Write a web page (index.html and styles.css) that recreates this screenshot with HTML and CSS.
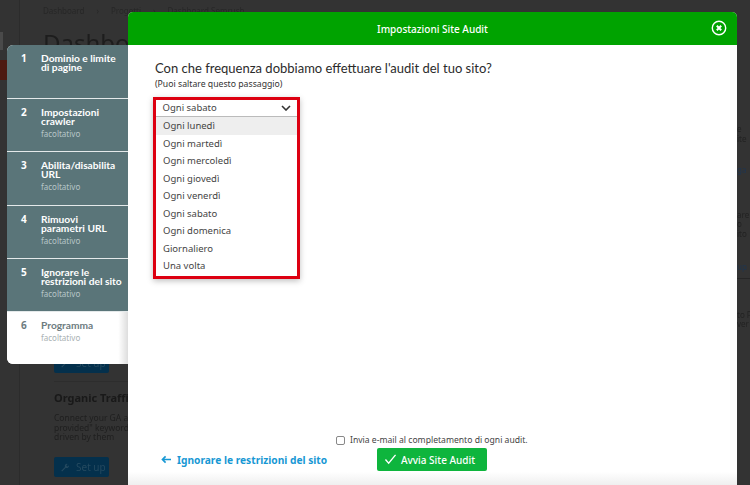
FILE: index.html
```html
<!DOCTYPE html>
<html lang="it">
<head>
<meta charset="utf-8">
<title>Impostazioni Site Audit</title>
<link rel="stylesheet" href="styles.css">
</head>
<body>
<div class="page">
  <aside class="rail"><div class="rail-input"></div><div class="rail-active"></div></aside>
  <main class="backdrop-main">
    <nav class="crumbs"><span>Dashboard</span><span class="sep">›</span><span>Progetti</span><span class="sep">›</span><span>Dashboard Semrush</span></nav>
    <h1 class="page-title">Dashboard</h1>
    <div class="bg-btn first-btn"><svg class="wrench" viewBox="0 0 12 12"><path d="M1.500 10.500 6 6a2.600 2.600 0 0 1 3.200-3.600L7.600 4l.6 1 1 .5L10.700 4A2.600 2.600 0 0 1 7 7L2.500 11.500z"/></svg>Set up</div>
    <div class="bg-rule"></div>
    <h2 class="bg-heading">Organic Traffic</h2>
    <p class="bg-text">Connect your GA and<br>provided" keywords<br>driven by them</p>
    <div class="bg-btn"><svg class="wrench" viewBox="0 0 12 12"><path d="M1.500 10.500 6 6a2.600 2.600 0 0 1 3.200-3.600L7.600 4l.6 1 1 .5L10.700 4A2.600 2.600 0 0 1 7 7L2.500 11.500z"/></svg>Set up</div>
  </main>
  <div class="bg-right">
    <p class="frag f1">e<br>ite</p>
    <p class="frag link f2">ga</p>
    <p class="frag f3">are<br>o<br>ito</p>
    <p class="frag link f4">up</p>
    <div class="frag-rule"></div>
    <p class="frag f5">to P<br>ver</p>
  </div>
</div>

<ol class="steps">
  <li class="step"><span class="num">1</span><div><b>Dominio e limite di&nbsp;pagine</b></div></li>
  <li class="step"><span class="num">2</span><div><b>Impostazioni crawler</b><small>facoltativo</small></div></li>
  <li class="step"><span class="num">3</span><div><b>Abilita/disabilita URL</b><small>facoltativo</small></div></li>
  <li class="step"><span class="num">4</span><div><b>Rimuovi parametri&nbsp;URL</b><small>facoltativo</small></div></li>
  <li class="step"><span class="num">5</span><div><b>Ignorare le restrizioni del sito</b><small>facoltativo</small></div></li>
  <li class="step current"><span class="num">6</span><div><b>Programma</b><small>facoltativo</small></div></li>
</ol>

<section class="modal">
  <header class="modal-head">
    <span>Impostazioni Site Audit</span>
    <svg class="close" viewBox="0 0 16 16"><circle cx="8" cy="8" r="6.700"/><path d="M5.800 5.800l4.400 4.400M10.200 5.800l-4.400 4.400"/></svg>
  </header>
  <div class="modal-body">
    <h2 class="question">Con che frequenza dobbiamo effettuare l'audit del tuo sito?</h2>
    <p class="hint">(Puoi saltare questo passaggio)</p>
    <div class="frame">
      <div class="select"><span>Ogni sabato</span><svg viewBox="0 0 10 6"><path d="M1 1l4 4 4-4"/></svg></div>
      <ul class="options">
        <li class="hover">Ogni lunedì</li>
        <li>Ogni martedì</li>
        <li>Ogni mercoledì</li>
        <li>Ogni giovedì</li>
        <li>Ogni venerdì</li>
        <li>Ogni sabato</li>
        <li>Ogni domenica</li>
        <li>Giornaliero</li>
        <li>Una volta</li>
      </ul>
    </div>
  </div>
  <footer class="modal-foot">
    <label class="mail"><span class="check"></span>Invia e-mail al completamento di ogni audit.</label>
    <div class="actions">
      <a class="back"><svg viewBox="0 0 12 10"><path d="M11 5H1.500M5 1.500 1.500 5 5 8.500"/></svg>Ignorare le restrizioni del sito</a>
      <button class="start" type="button"><svg viewBox="0 0 14 12"><path d="M1.500 6 5 10l7.500-9"/></svg>Avvia Site Audit</button>
    </div>
  </footer>
</section>
</body>
</html>
```
FILE: styles.css
```css
* { box-sizing: border-box; }
html, body { margin: 0; height: 485px; overflow: hidden; }
body { background: #333; font-family: "Noto Sans", "Open Sans", sans-serif; color: #333; position: relative; }
ol, ul { list-style: none; margin: 0; padding: 0; }
h1, h2, p { margin: 0; }

/* dimmed page behind the dialog */
.page { display: flex; height: 485px; filter: blur(.5px); }
.rail { width: 20px; flex: none; border-right: 1px solid #2c2c2c; padding-top: 32px; }
.rail-input { width: 3px; height: 18px; background: #4a4a4a; }
.rail-active { width: 7px; height: 20px; margin-top: 10px; background: #4d1a12; }
.backdrop-main { width: 108px; flex: none; overflow: visible; white-space: nowrap; padding-left: 23px; color: #222; position: relative; }
.crumbs { display: flex; gap: 12px; height: 20px; align-items: center; font-size: 8px; color: #272727; }
.page-title { font-size: 24px; font-weight: 400; line-height: 34px; margin: 6px 0 2px; color: #1d1d1d; }
.bg-btn { display: flex; align-items: center; gap: 6px; width: 55px; height: 20px; padding-left: 6px; background: #04304c; color: #24495f; font-size: 10px; margin-left: 11px; border-radius: 2px; }
.first-btn { margin-top: 293px; }
.wrench { width: 10px; height: 10px; fill: #24495f; }
.bg-rule { height: 1px; background: #2d2d2d; margin: 8px 0 10px 11px; }
.bg-heading { font-size: 11px; line-height: 12px; font-weight: 700; color: #191919; margin: 0 0 9px 11px; }
.bg-text { font-size: 8.500px; line-height: 9.500px; color: #1f1f1f; margin: 0 0 15px 11px; }
.bg-right { margin-left: auto; width: 13px; overflow: hidden; white-space: nowrap; padding-top: 124px; font-size: 8px; line-height: 9.500px; color: #222; }
.frag { margin: 0; }
.frag.link { color: #1e3550; }
.f2 { margin-top: 22px; }
.f3 { margin-top: 35px; }
.f4 { margin-top: 24px; }
.frag-rule { height: 1px; background: #262626; margin-top: 6px; }
.f5 { margin-top: 31px; }

/* wizard steps */
.steps { position: absolute; left: 7px; top: 45px; width: 121px; height: 319px; border-radius: 6px 0 0 6px; overflow: hidden; background: #fff; display: grid; grid-template-rows: 54px 53px 54px 53px 53px 52px; }
.step { display: flex; background: #5a7579; border-bottom: 1px solid #e4e9ea; padding: 9px 0 0 14px; color: #fff; font-size: 10px; line-height: 9px; }
.step b { display: block; font-family: "Lato", "Noto Sans", sans-serif; font-weight: 700; font-size: 10.200px; }
.step small { display: block; font-size: 8px; line-height: 10px; margin-top: 3px; color: #b7c6c8; }
.num { width: 20px; flex: none; font-weight: 700; }
.current { background: linear-gradient(90deg, #fff 92%, #ddd 100%); border: 0; color: #6d7c7f; }
.current small { color: #a9b1b3; }

/* dialog */
.modal { position: absolute; left: 128px; top: 12px; width: 609px; height: 473px; background: #fff; border-radius: 5px 5px 0 0; display: flex; flex-direction: column; }
.modal-head { flex: none; height: 33px; background: #00a300; border-radius: 5px 5px 0 0; color: #fff; font-size: 10px; font-weight: 500; display: flex; align-items: center; justify-content: center; position: relative; }
.close { position: absolute; right: 10px; top: 8px; width: 16px; height: 16px; fill: none; stroke: #fff; stroke-width: 1.400; }
.close path { stroke-width: 2; }
.modal-body { flex: 1; padding: 14px 0 0 27px; }
.question { font-family: "Lato", "Noto Sans", sans-serif; font-size: 13px; line-height: 18px; font-weight: 400; color: #2b2b2b; }
.hint { font-size: 8.700px; line-height: 11px; margin-top: 2px; color: #333; }
.frame { width: 147px; height: 182px; margin-top: 7px; margin-left: -2px; border: 3px solid #dd0011; box-shadow: 0 2px 6px rgba(0,0,0,.25); font-size: 9.500px; color: #444; }
.select { height: 17px; padding: 0 6px 1px 6.500px; display: flex; align-items: center; justify-content: space-between; border-bottom: 1px solid #bbb; }
.select svg { width: 10px; height: 6px; fill: none; stroke: #333; stroke-width: 1.600; }
.options li { height: 17.500px; line-height: 17.500px; padding-left: 7px; }
.options .hover { background: #eee; }
.modal-foot { flex: none; height: 53px; background: linear-gradient(#fff 75%, #efefef 100%); position: relative; }
.mail { display: flex; align-items: center; gap: 5px; padding-left: 208px; height: 16px; font-size: 8.600px; color: #444; }
.check { width: 9px; height: 9px; border: 1px solid #888; border-radius: 2px; background: #fff; }
.actions { display: flex; align-items: center; padding-left: 33px; height: 23px; }
.back { display: flex; align-items: center; gap: 5px; width: 216px; color: #1798d4; font-weight: 700; font-size: 10.200px; white-space: nowrap; }
.back svg { width: 11px; height: 9px; fill: none; stroke: #1798d4; stroke-width: 1.800; }
.start { width: 110px; height: 23px; border: 0; border-radius: 2px; background: #0eb53d; color: #fff; font: 500 10px "Noto Sans", sans-serif; display: flex; align-items: center; gap: 4px; padding: 0 0 0 7px; }
.start svg { width: 13px; height: 11px; fill: none; stroke: #fff; stroke-width: 1.500; }
```
